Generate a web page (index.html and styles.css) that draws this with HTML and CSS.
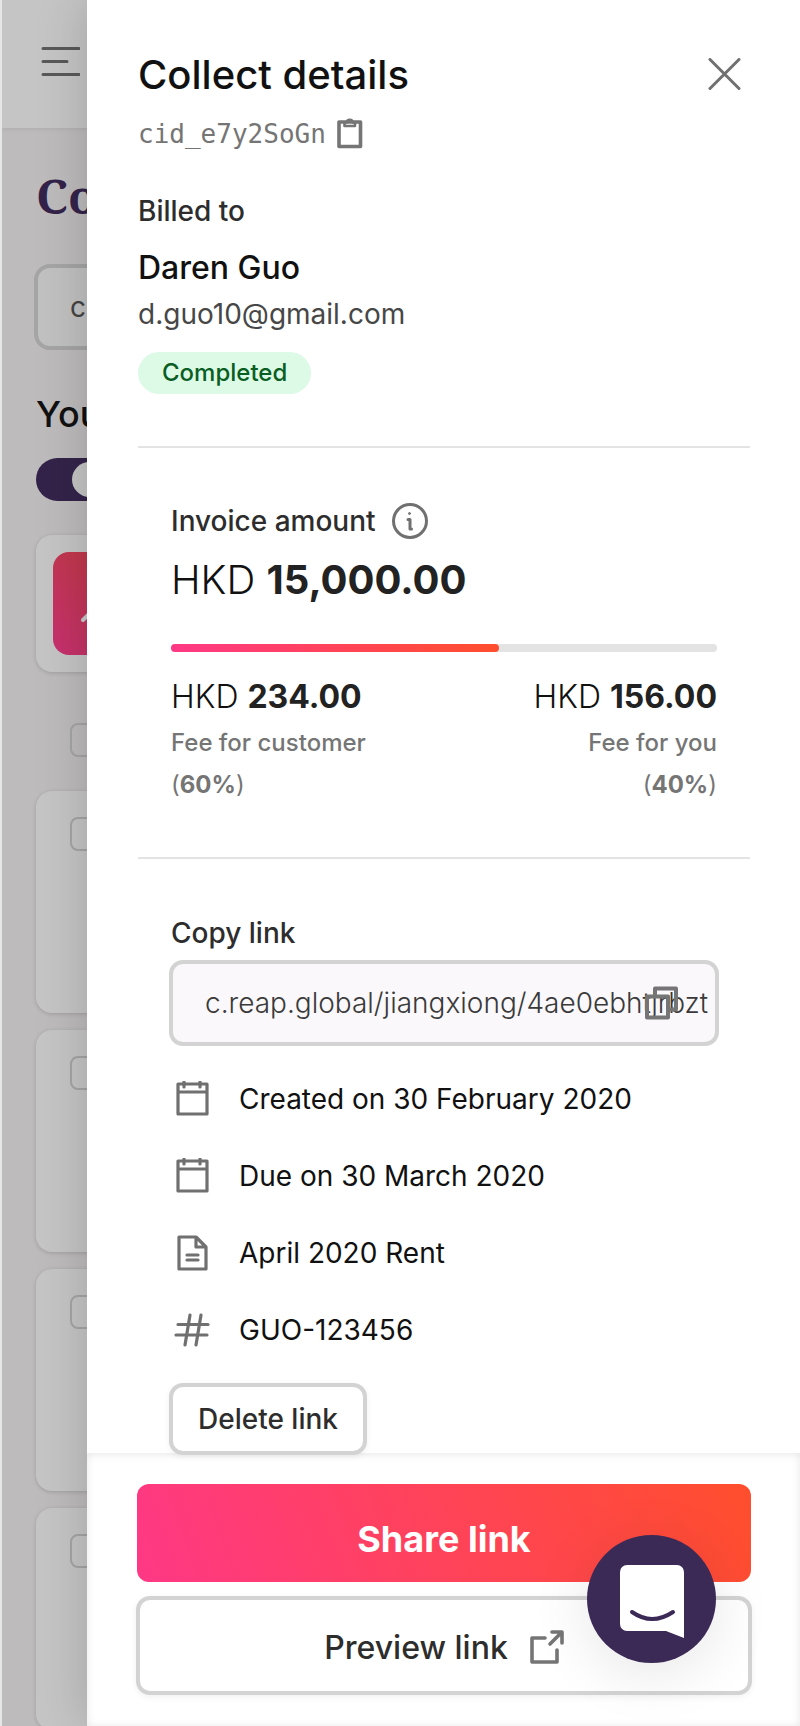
FILE: index.html
```html
<!DOCTYPE html>
<html lang="en">
<head>
  <meta charset="UTF-8" />
  <meta name="viewport" content="width=device-width, initial-scale=1.0" />
  <title>Collect details</title>
  <link rel="stylesheet" href="styles.css">
</head>
<body>
  <div class="page">
    <header class="topbar">
      <button class="menu-btn" aria-label="Menu">
        <svg width="40" height="32" viewBox="0 0 40 32" fill="none" stroke="#595959" stroke-width="3" stroke-linecap="round"><path d="M3 2.5h36M3 15.5h24M3 28.5h36"/></svg>
      </button>
    </header>
    <main class="page-body">
      <h1>Co</h1>
      <input class="search" type="text" value="c" aria-label="Search" />
      <h2>You</h2>
      <input class="toggle" type="checkbox" aria-label="Show links" checked />
      <div class="promo">
        <div class="promo-tile">
          <svg width="60" height="40" viewBox="0 0 60 40" fill="none" stroke="#c9c9c9" stroke-width="4" stroke-linecap="round"><path d="M2 14L14 2l12 12"/></svg>
        </div>
      </div>
      <input class="check check-all" type="checkbox" aria-label="Select all" />
      <div class="card"><input class="check" type="checkbox" aria-label="Select link 1" /></div>
      <div class="card"><input class="check" type="checkbox" aria-label="Select link 2" /></div>
      <div class="card"><input class="check" type="checkbox" aria-label="Select link 3" /></div>
      <div class="card"><input class="check" type="checkbox" aria-label="Select link 4" /></div>
    </main>
  </div>

  <aside class="drawer">
    <div class="drawer-content">
      <div class="drawer-head">
        <h2>Collect details</h2>
        <button class="icon-btn" aria-label="Close">
          <svg width="34" height="34" viewBox="0 0 34 34" fill="none" stroke="#707070" stroke-width="3" stroke-linecap="round"><path d="M2 1.5l29 29M31 1.5l-29 29"/></svg>
        </button>
      </div>
      <div class="cid">
        <span>cid_e7y2SoGn</span>
        <button class="icon-btn" aria-label="Copy id">
          <svg width="26" height="32" viewBox="0 0 26 32" fill="none" stroke="#757575" stroke-linejoin="round"><path stroke-width="3.6" d="M2 4h21.5v24.5H2z"/><path stroke-width="2.6" d="M7.5 4.500v3.500h10.500v-3.500h-2a3.300 3.300 0 0 0-6.500 0z"/></svg>
        </button>
      </div>

      <section class="billed">
        <p class="label">Billed to</p>
        <p class="name">Daren Guo</p>
        <p class="email">d.guo10@gmail.com</p>
        <span class="badge">Completed</span>
      </section>

      <hr />

      <section class="invoice">
        <div class="label invoice-label">
          <span>Invoice amount</span>
          <svg width="36" height="36" viewBox="0 0 36 36" fill="none" stroke="#707070" stroke-width="3" stroke-linecap="round" stroke-linejoin="round"><circle cx="18" cy="18" r="16.5"/><path d="M16 16.5h2v9.500h1.500"/><circle cx="17.5" cy="10.5" r="1" fill="#707070" stroke-width="1"/></svg>
        </div>
        <p class="amount">HKD <b>15,000.00</b></p>
        <div class="bar"><div class="bar-fill" style="width: 60%"></div></div>
        <div class="fees">
          <div>
            <p class="fee-amount">HKD <b>234.00</b></p>
            <p class="fee-text">Fee for customer<br><span>(<b>60%</b>)</span></p>
          </div>
          <div class="fee-right">
            <p class="fee-amount">HKD <b>156.00</b></p>
            <p class="fee-text">Fee for you<br><span>(<b>40%</b>)</span></p>
          </div>
        </div>
      </section>

      <hr />

      <section class="link-section">
        <label class="label" for="copyLink">Copy link</label>
        <div class="link-box">
          <input id="copyLink" type="text" value="c.reap.global/jiangxiong/4ae0ebhtjrbzt" readonly />
          <button class="icon-btn copy-btn" aria-label="Copy link">
            <svg width="34" height="34" viewBox="0 0 34 34" fill="none" stroke="#757575" stroke-width="4" stroke-linejoin="round"><path d="M3 10.5h21v21H3z"/><path d="M11 10V2.500h21v21h-8"/></svg>
          </button>
        </div>

        <ul class="details">
          <li>
            <svg width="36" height="36" viewBox="0 0 36 36" fill="none" stroke="#707070" stroke-width="3.2" stroke-linecap="round" stroke-linejoin="round"><path d="M4 3h29v30H4zM4 11h29M10 1v5M26 1v5"/></svg>
            Created on 30 February 2020
          </li>
          <li>
            <svg width="36" height="36" viewBox="0 0 36 36" fill="none" stroke="#707070" stroke-width="3.2" stroke-linecap="round" stroke-linejoin="round"><path d="M4 3h29v30H4zM4 11h29M10 1v5M26 1v5"/></svg>
            Due on 30 March 2020
          </li>
          <li>
            <svg width="36" height="36" viewBox="0 0 36 36" fill="none" stroke="#707070" stroke-width="3.2" stroke-linecap="round" stroke-linejoin="round"><path d="M5 2h17l10 10v22H5zM22 2v10h10M13 20h11M13 25h11"/></svg>
            April 2020 Rent
          </li>
          <li>
            <svg width="36" height="36" viewBox="0 0 36 36" fill="none" stroke="#707070" stroke-width="3.2" stroke-linecap="round"><path d="M4 12.5h30M2 23h31M16 3l-5 30M27 3l-5 30"/></svg>
            GUO-123456
          </li>
        </ul>

        <button class="btn-outline delete-btn">Delete link</button>
      </section>
    </div>

    <footer class="drawer-footer">
      <button class="share-btn">Share link</button>
      <button class="btn-outline preview-btn">
        Preview link
        <svg width="34" height="34" viewBox="0 0 34 34" fill="none" stroke="#757575" stroke-width="3.6" stroke-linecap="round" stroke-linejoin="round"><path d="M15 8H2v24h25V20M20 14L31 3M22 2h10v11"/></svg>
      </button>
    </footer>
  </aside>

  <button class="chat-btn" aria-label="Chat">
    <svg width="64" height="74" viewBox="0 0 64 74"><path fill="#fff" d="M7 0h50a7 7 0 0 1 7 7v66L46 66H7a7 7 0 0 1-7-7V7a7 7 0 0 1 7-7z"/><path d="M12 47q20 14 41 0" fill="none" stroke="#3b2956" stroke-width="4" stroke-linecap="round"/></svg>
  </button>
</body>
</html>
```
FILE: styles.css
```css
:root {
  --text: #111;
  --text-soft: #2d2d2d;
  --gray: #757575;
  --line: #e3e3e3;
  --border: #d3d3d3;
  --purple: #3b2956;
}

* {
  box-sizing: border-box;
}

body {
  margin: 0;
  font-family: Inter, "Liberation Sans", sans-serif;
  font-size: 28px;
  line-height: 40px;
  color: var(--text);
  background: #fff;
  display: grid;
  grid-template-columns: minmax(0, 1fr);
  min-height: 100vh;
}

h1, h2, p, ul {
  margin: 0;
  padding: 0;
}

button, input {
  font-family: inherit;
  font-size: inherit;
  margin: 0;
}

button {
  cursor: pointer;
}

svg {
  display: block;
  flex-shrink: 0;
}

/* page behind the drawer */
.page {
  grid-area: 1 / 1;
  height: 100vh;
  overflow: hidden;
  border-left: 2px solid #e6e6e6;
  background: #bebbbc;
}

.topbar {
  height: 128px;
  padding: 46px 38px;
  background: #c5c5c5;
  box-shadow: 0 0 6px rgba(0, 0, 0, 0.1);
}

.menu-btn, .icon-btn {
  border: none;
  background: none;
  padding: 0;
}

.page-body {
  padding: 40px 32px;
  display: flex;
  flex-direction: column;
}

.page-body h1 {
  font-family: "Noto Serif", "Liberation Serif", serif;
  font-size: 48px;
  line-height: 56px;
  color: #33234a;
  margin-left: 2px;
}

.page-body h2 {
  font-size: 36px;
  line-height: 44px;
  font-weight: 500;
  margin: 42px 0 22px 2px;
}

.search {
  height: 86px;
  margin-top: 40px;
  padding: 0 32px;
  border: 4px solid #a5a5a5;
  border-radius: 16px;
  background: #c2c1c1;
  color: #444;
}

.toggle {
  appearance: none;
  width: 84px;
  height: 43px;
  padding: 4px;
  margin-left: 2px;
  border-radius: 22px;
  background: #33234a;
  display: flex;
  justify-content: flex-end;
}

.toggle::before {
  content: "";
  width: 44px;
  height: 35px;
  border-radius: 18px;
  background: #c5c5c5;
}

.promo, .card {
  margin-left: 2px;
  border-radius: 16px;
  background: #c5c5c5;
  box-shadow: 0 1px 4px rgba(0, 0, 0, 0.16);
}

.promo {
  margin-top: 34px;
  padding: 17px;
}

.promo-tile {
  height: 103px;
  border-radius: 16px;
  padding: 54px 28px 0;
  background: linear-gradient(45deg, #c73070, #bf3a40 120px);
}

.check {
  appearance: none;
  display: block;
  width: 34px;
  height: 34px;
  border: 2px solid #a5a5a5;
  border-radius: 8px;
}

.check-all {
  margin: 51px 0 34px 36px;
}

.card {
  flex-shrink: 0;
  height: 222px;
  padding: 26px 34px;
  margin-bottom: 17px;
}

/* drawer */
.drawer {
  grid-area: 1 / 1;
  margin-left: 87px;
  min-height: 100vh;
  background: #fff;
  box-shadow: 0 0 48px rgba(0, 0, 0, 0.18);
  display: flex;
  flex-direction: column;
  z-index: 1;
}

.drawer-content {
  padding: 51px 50px 0 51px;
}

.drawer-head {
  display: flex;
  align-items: center;
  justify-content: space-between;
  padding-right: 8px;
}

.drawer-head h2 {
  font-size: 40px;
  line-height: 48px;
  font-weight: 500;
}

.cid {
  display: flex;
  align-items: center;
  gap: 11px;
  height: 36px;
  margin-top: 17px;
  font-family: "DejaVu Sans Mono", monospace;
  font-size: 26px;
  color: var(--gray);
}

.label {
  font-weight: 500;
  color: var(--text-soft);
}

.billed {
  margin-top: 39px;
}

.name {
  margin-top: 15px;
  font-size: 32px;
  line-height: 44px;
  font-weight: 500;
}

.email {
  margin: 4px 0 18px;
  color: #474747;
}

.badge {
  display: inline-block;
  padding: 0 24px;
  border-radius: 21px;
  background: #dcfae6;
  color: #0b5e23;
  font-size: 24px;
  line-height: 42px;
  font-weight: 500;
  vertical-align: top;
}

hr {
  margin: 0;
  border: none;
  height: 2px;
  background: var(--line);
}

.billed + hr {
  margin-top: 52px;
}

.invoice {
  padding: 55px 33px 51px;
}

.invoice-label {
  display: flex;
  align-items: center;
  gap: 16px;
  height: 36px;
}

.amount {
  margin-top: 17px;
  font-size: 40px;
  line-height: 48px;
}

.amount, .fee-amount {
  font-weight: 300;
}

.amount b, .fee-amount b {
  font-weight: 700;
  color: #222;
}

.bar {
  height: 8px;
  margin-top: 40px;
  border-radius: 4px;
  background: var(--line);
}

.bar-fill {
  height: 100%;
  border-radius: 4px;
  background: linear-gradient(90deg, #ff3885, #ff4e2d);
}

.fees {
  display: flex;
  justify-content: space-between;
  margin-top: 23px;
}

.fee-right {
  text-align: right;
}

.fee-amount {
  font-size: 32px;
  line-height: 44px;
}

.fee-text {
  margin-top: 3px;
  font-size: 24px;
  line-height: 42px;
  font-weight: 500;
  color: var(--gray);
}

.fee-text span {
  font-weight: 400;
}

.link-section {
  padding: 54px 31px 0;
}

.link-section .label {
  display: block;
  margin-left: 2px;
}

.link-box {
  position: relative;
  margin-top: 7px;
}

.link-box input {
  display: block;
  width: 100%;
  height: 86px;
  padding: 0 0 0 32px;
  border: 4px solid var(--border);
  border-radius: 14px;
  background: #faf8fa;
  color: #3a3a3a;
  font-weight: 300;
}

.copy-btn {
  position: absolute;
  top: 26px;
  right: 41px;
}

.details {
  list-style: none;
  margin: 14px 0 15px 5px;
}

.details li {
  display: flex;
  align-items: center;
  gap: 29px;
  height: 77px;
}

.btn-outline {
  border: 4px solid var(--border);
  border-radius: 14px;
  background: #fff;
  color: var(--text-soft);
  font-weight: 500;
  box-shadow: 0 2px 6px rgba(0, 0, 0, 0.06);
}

.delete-btn {
  display: block;
  position: relative;
  z-index: 1;
  height: 72px;
  margin-bottom: -2px;
  padding: 0 25px;
}

.drawer-footer {
  margin-top: auto;
  padding: 31px 48px 31px 49px;
  display: flex;
  flex-direction: column;
  gap: 14px;
  box-shadow: inset 0 1px 8px rgba(0, 0, 0, 0.1);
}

.share-btn {
  height: 98px;
  margin: 0 1px;
  border: none;
  border-radius: 12px;
  background: linear-gradient(70deg, #ff3885, #ff4e2d);
  color: #fff;
  font-size: 36px;
  font-weight: 700;
  padding-top: 12px;
}

.preview-btn {
  height: 99px;
  display: flex;
  align-items: center;
  justify-content: center;
  gap: 22px;
  padding-top: 4px;
  font-size: 32px;
}

.chat-btn {
  position: fixed;
  right: 84px;
  bottom: 63px;
  z-index: 2;
  width: 129px;
  height: 128px;
  padding: 6px 0 0;
  border: none;
  border-radius: 50%;
  background: var(--purple);
  box-shadow: 0 10px 60px rgba(0, 0, 0, 0.1);
  display: flex;
  align-items: center;
  justify-content: center;
}
```
